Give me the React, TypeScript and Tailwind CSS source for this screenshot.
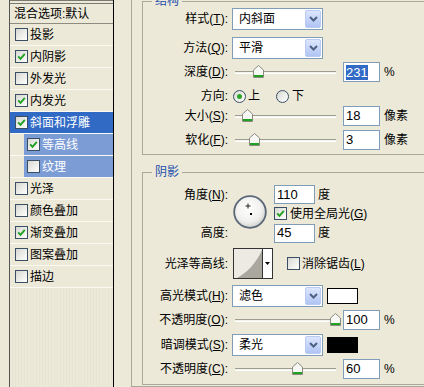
import React from 'react';

type Effect = { name: string; checked: boolean; selected?: boolean; sub?: boolean };

const effects: Effect[] = [
  { name: '投影', checked: false },
  { name: '内阴影', checked: true },
  { name: '外发光', checked: false },
  { name: '内发光', checked: true },
  { name: '斜面和浮雕', checked: true, selected: true },
  { name: '等高线', checked: true, sub: true },
  { name: '纹理', checked: false, sub: true },
  { name: '光泽', checked: false },
  { name: '颜色叠加', checked: false },
  { name: '渐变叠加', checked: true },
  { name: '图案叠加', checked: false },
  { name: '描边', checked: false },
];

const CheckBox = ({ checked = false }: { checked?: boolean }) => (
  <span className="flex h-[13px] w-[13px] shrink-0 items-center justify-center border border-[#3a4f66] bg-linear-to-br from-[#d8d8d2] to-white">
    {checked && (
      <svg width="9" height="9" viewBox="0 0 9 9">
        <path d="M1.2 4.4 L3.5 6.8 L7.8 1.8" fill="none" stroke="#21a121" strokeWidth="1.9" />
      </svg>
    )}
  </span>
);

const Radio = ({ checked = false }: { checked?: boolean }) => (
  <span className="flex h-[13px] w-[13px] shrink-0 items-center justify-center rounded-full border border-[#3a4f66] bg-linear-to-br from-[#d8d8d2] to-white">
    {checked && <span className="h-[5px] w-[5px] rounded-full bg-[#2ba62b]" />}
  </span>
);

const Select = ({ value }: { value: string }) => (
  <div className="flex h-[22px] w-[91px] shrink-0 border border-[#7f9db9] bg-white">
    <span className="flex-1 pl-[6px] leading-[20px]">{value}</span>
    <span className="m-px flex w-[16px] items-center justify-center rounded-[2px] border border-[#b9cbf3] bg-linear-to-b from-[#dce6fd] to-[#b0c4f3]">
      <svg width="9" height="6" viewBox="0 0 9 6">
        <path d="M1 1 L4.5 4.5 L8 1" fill="none" stroke="#4d6185" strokeWidth="2" />
      </svg>
    </span>
  </div>
);

// pos: thumb centre, px from the slider's left edge
const Slider = ({ pos }: { pos: number }) => (
  <div className="relative flex h-full w-[107px] shrink-0 items-center">
    <div className="mx-[3px] h-[3px] flex-1 border-y border-t-[#9d9d92] border-b-white bg-[#f3f2ec]" />
    <svg
      className="absolute top-1/2 -translate-y-[7px]"
      style={{ left: pos - 5 }}
      width="11"
      height="13"
      viewBox="0 0 11 13"
    >
      <path d="M0.5 5 L5.5 0.5 L10.5 5 V12.5 H0.5 Z" fill="#f7f7f4" stroke="#8a8a80" />
      <rect x="1" y="10" width="9" height="2" fill="#21a121" />
    </svg>
  </div>
);

const NumBox = ({ children, className = 'h-[20px] w-[37px]' }: { children: React.ReactNode; className?: string }) => (
  <div className={`flex shrink-0 items-center border border-[#7f9db9] bg-white pl-[2px] text-[13px] ${className}`}>
    {children}
  </div>
);

const Row = ({ label, className, children }: { label: React.ReactNode; className: string; children: React.ReactNode }) => (
  <div className={`flex items-center gap-[4px] ${className}`}>
    <div className="w-[85px] shrink-0 text-right">{label}</div>
    {children}
  </div>
);

const Dial = () => (
  <svg width="34" height="34" viewBox="0 0 34 34">
    <defs>
      <radialGradient id="dial" cx="45%" cy="40%" r="60%">
        <stop offset="0" stopColor="#ffffff" />
        <stop offset="0.7" stopColor="#f0f0ee" />
        <stop offset="1" stopColor="#cfcfca" />
      </radialGradient>
    </defs>
    <circle cx="17" cy="17" r="15.8" fill="url(#dial)" stroke="#5a6778" strokeWidth="1.8" />
    <path d="M15 8.5 V13.5 M12.5 11 H17.5" stroke="#222" strokeWidth="1" />
    <rect x="17" y="18" width="2" height="2" fill="#000" />
  </svg>
);

export default function App() {
  return (
    <div className="flex h-[387px] w-[424px] overflow-hidden bg-[#ece9d8] font-['Liberation_Sans','Noto_Sans_CJK_SC',sans-serif] text-[12px] text-black">
      {/* список эффектов слева */}
      <div className="ml-[9px] flex w-[105px] shrink-0 flex-col border-x border-l-[#555] border-r-black bg-[image:repeating-linear-gradient(90deg,#ece9d8_0px,#ece9d8_2px,#e7e4d3_2px,#e7e4d3_3px)]">
        <div className="h-[4px] shrink-0 border-y border-[#7b7a70] bg-[#ece9d8]" />
        <div className="flex h-[20px] shrink-0 items-center border-b border-[#8e8c80] bg-[#ece9d8] pl-[4px]">混合选项:默认</div>
        {effects.map((it) => (
          <div
            key={it.name}
            className={`flex h-[22px] shrink-0 border-b border-[#faf9f2] ${it.selected ? 'bg-[#316ac5] text-white' : 'bg-[#ece9d8]'}`}
          >
            {it.sub ? (
              <div className="ml-[14px] flex flex-1 items-center gap-[2px] bg-[#7c9cd6] pl-[3px] text-white">
                <CheckBox checked={it.checked} />
                {it.name}
              </div>
            ) : (
              <div className="flex flex-1 items-center gap-[2px] pl-[5px]">
                <CheckBox checked={it.checked} />
                {it.name}
              </div>
            )}
          </div>
        ))}
      </div>

      {/* параметры */}
      <div className="ml-[17px] h-[387px] flex-1 overflow-hidden border-b border-l border-[#aca899] pl-[10px]">
        <fieldset className="-mt-[6px] w-[330px] border border-[#aca899] pb-[4px]">
          <legend className="ml-[9px] px-[3px] leading-[14px] text-[#1d4fae]">结构</legend>
          <Row label={<>样式(<u>T</u>):</>} className="h-[22px]">
            <Select value="内斜面" />
          </Row>
          <Row label={<>方法(<u>Q</u>):</>} className="mt-[7px] h-[22px]">
            <Select value="平滑" />
          </Row>
          <Row label={<>深度(<u>D</u>):</>} className="mt-[3px] h-[20px]">
            <Slider pos={26} />
            <NumBox>
              <span className="bg-[#316ac5] leading-[15px] text-white">231</span>
            </NumBox>
            <span>%</span>
          </Row>
          <Row label="方向:" className="mt-[5px] h-[18px]">
            <div className="ml-[1px] flex items-center">
              <Radio checked />
              <span className="ml-[2px]">上</span>
              <span className="ml-[16px]">
                <Radio />
              </span>
              <span className="ml-[3px]">下</span>
            </div>
          </Row>
          <Row label={<>大小(<u>S</u>):</>} className="mt-[1px] h-[20px]">
            <Slider pos={15} />
            <NumBox>18</NumBox>
            <span>像素</span>
          </Row>
          <Row label={<>软化(<u>F</u>):</>} className="mt-[4px] h-[20px]">
            <Slider pos={22} />
            <NumBox>3</NumBox>
            <span>像素</span>
          </Row>
        </fieldset>

        <fieldset className="mt-[10px] w-[330px] border border-[#aca899] pb-[5px]">
          <legend className="ml-[9px] px-[3px] leading-[14px] text-[#1d4fae]">阴影</legend>
          <div className="mt-[6px] grid grid-cols-[85px_46px_auto] grid-rows-[19px_19px_20px]">
            <div className="col-start-1 row-start-1 self-center text-right">
              角度(<u>N</u>):
            </div>
            <div className="col-start-2 row-span-3 row-start-1 ml-[5px] mt-[10px]">
              <Dial />
            </div>
            <div className="col-start-3 row-start-1 flex items-center gap-[3px]">
              <NumBox className="h-[19px] w-[41px]">110</NumBox>
              <span>度</span>
            </div>
            <div className="col-start-3 row-start-2 flex items-center gap-[3px]">
              <CheckBox checked />
              <span>
                使用全局光(<u>G</u>)
              </span>
            </div>
            <div className="col-start-1 row-start-3 self-center text-right">高度:</div>
            <div className="col-start-3 row-start-3 flex items-center gap-[3px]">
              <NumBox className="h-[19px] w-[41px]">45</NumBox>
              <span>度</span>
            </div>
          </div>

          <Row label="光泽等高线:" className="mt-[5px] h-[31px]">
            <div className="ml-[1px] flex h-[31px] w-[40px] shrink-0 border border-[#333]">
              <div className="w-[28px] bg-[#eceae3]">
                <svg width="28" height="29" viewBox="0 0 28 29">
                  <path d="M3 29 C 12 24, 22 15, 28 1 L28 29 Z" fill="#aaa79e" />
                </svg>
              </div>
              <div className="flex flex-1 items-center justify-center border-l border-[#333] bg-white">
                <svg width="5" height="3" viewBox="0 0 5 3">
                  <path d="M0 0 H5 L2.5 3 Z" fill="#000" />
                </svg>
              </div>
            </div>
            <div className="ml-[10px] flex items-center gap-[2px]">
              <CheckBox />
              <span>
                消除锯齿(<u>L</u>)
              </span>
            </div>
          </Row>

          <Row label={<>高光模式(<u>H</u>):</>} className="mt-[6px] h-[22px]">
            <Select value="滤色" />
            <div className="h-[16px] w-[31px] shrink-0 border border-black bg-white" />
          </Row>
          <Row label={<>不透明度(<u>O</u>):</>} className="mt-[3px] h-[20px]">
            <Slider pos={103} />
            <NumBox>100</NumBox>
            <span>%</span>
          </Row>
          <Row label={<>暗调模式(<u>S</u>):</>} className="mt-[4px] h-[22px]">
            <Select value="柔光" />
            <div className="h-[16px] w-[31px] shrink-0 border border-black bg-black" />
          </Row>
          <Row label={<>不透明度(<u>C</u>):</>} className="mt-[3px] h-[20px]">
            <Slider pos={65} />
            <NumBox>60</NumBox>
            <span>%</span>
          </Row>
        </fieldset>
      </div>
    </div>
  );
}
